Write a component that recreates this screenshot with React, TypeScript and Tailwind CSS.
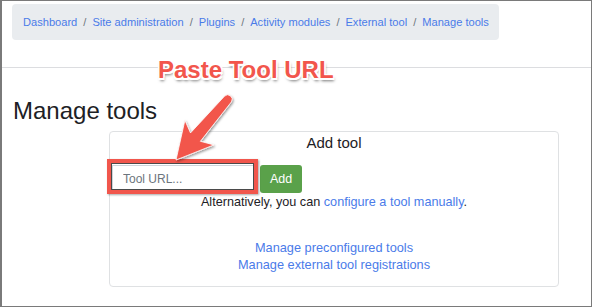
import React from 'react';

const crumbs = ['Dashboard', 'Site administration', 'Plugins', 'Activity modules', 'External tool', 'Manage tools'];

const App: React.FC = () => {
  return (
    <div className="relative w-[592px] h-[307px] overflow-hidden bg-white border border-l-2 border-[#7a7a7a] font-['Liberation_Sans',Arial,sans-serif] text-[#1d2125]">
      {/* breadcrumb */}
      <div className="mt-[3px] ml-[10px] w-[487px] h-[36px] rounded-[4px] bg-[#e9ecef] flex items-center pl-[11px] text-[11.1px] gap-[6px]">
        {crumbs.map((c, i) => (
          <React.Fragment key={c}>
            {i > 0 && <span className="text-[#6c757d]">/</span>}
            <a className="text-[#4a7be9]">{c}</a>
          </React.Fragment>
        ))}
      </div>

      <div className="mt-[27px] h-px bg-[#dcdde0]" />

      <h2 className="mt-[28px] ml-[11px] text-[24px] leading-[29px] font-normal">Manage tools</h2>

      {/* card */}
      <div className="mt-[6px] ml-[107px] w-[450px] h-[156px] rounded-[4px] border border-[#dfe1e3] flex flex-col">
        <div className="text-center text-[15px] leading-[22px]">Add tool</div>
        <div className="mt-[11px] pl-[2px] flex items-center gap-[6px]">
          <input
            placeholder="Tool URL..."
            className="w-[142px] h-[28px] border border-[#ced4da] pl-[10px] text-[12px] placeholder:text-[#6c757d] outline-none"
          />
          <button className="h-[28px] w-[42px] rounded-[3px] bg-[#5aa14a] text-white text-[12.5px]">Add</button>
        </div>
        <div className="text-center text-[12.66px] leading-[18px]">
          Alternatively, you can <a className="text-[#4a7be9]">configure a tool manually</a>.
        </div>
        <div className="mt-[28px] flex flex-col items-center text-[12.75px] leading-[17px] text-[#4a7be9]">
          <a>Manage preconfigured tools</a>
          <a>Manage external tool registrations</a>
        </div>
      </div>

      {/* annotation overlay */}
      <div className="absolute left-[105px] top-[158px] w-[151px] h-[35px] border-[4px] border-[#f1564c] shadow-[inset_0_0_0_1px_#4a4a4a,1px_1px_2px_rgba(0,0,0,0.35)]" />

      <div className="absolute left-[156px] top-[55px] text-[24px] leading-[28px] font-bold text-[#f2564c] [text-shadow:-1.5px_-1.5px_0_#fff,1.5px_-1.5px_0_#fff,-1.5px_1.5px_0_#fff,1.5px_1.5px_0_#fff,0_-1.5px_0_#fff,0_1.5px_0_#fff,1px_2.5px_3px_rgba(0,0,0,0.55)]">
        Paste Tool URL
      </div>

      <svg className="absolute left-[166px] top-[89px]" width="72" height="76" viewBox="168 90 72 76">
        <defs>
          <filter id="sh" x="-20%" y="-20%" width="140%" height="140%">
            <feDropShadow dx="1" dy="1.5" stdDeviation="1" floodColor="#000" floodOpacity="0.4" />
          </filter>
        </defs>
        <path
          d="M224.6 96.1 L190.5 132.9 L184.9 120.3 L176 160 L213.9 144.9 L200.4 141.3 L231.4 101.9 A4.5 4.5 0 0 0 224.6 96.1 Z"
          fill="#f2564c"
          stroke="#fff"
          strokeWidth="0.8"
          strokeLinejoin="round"
          filter="url(#sh)"
        />
      </svg>
    </div>
  );
};

export default App;
